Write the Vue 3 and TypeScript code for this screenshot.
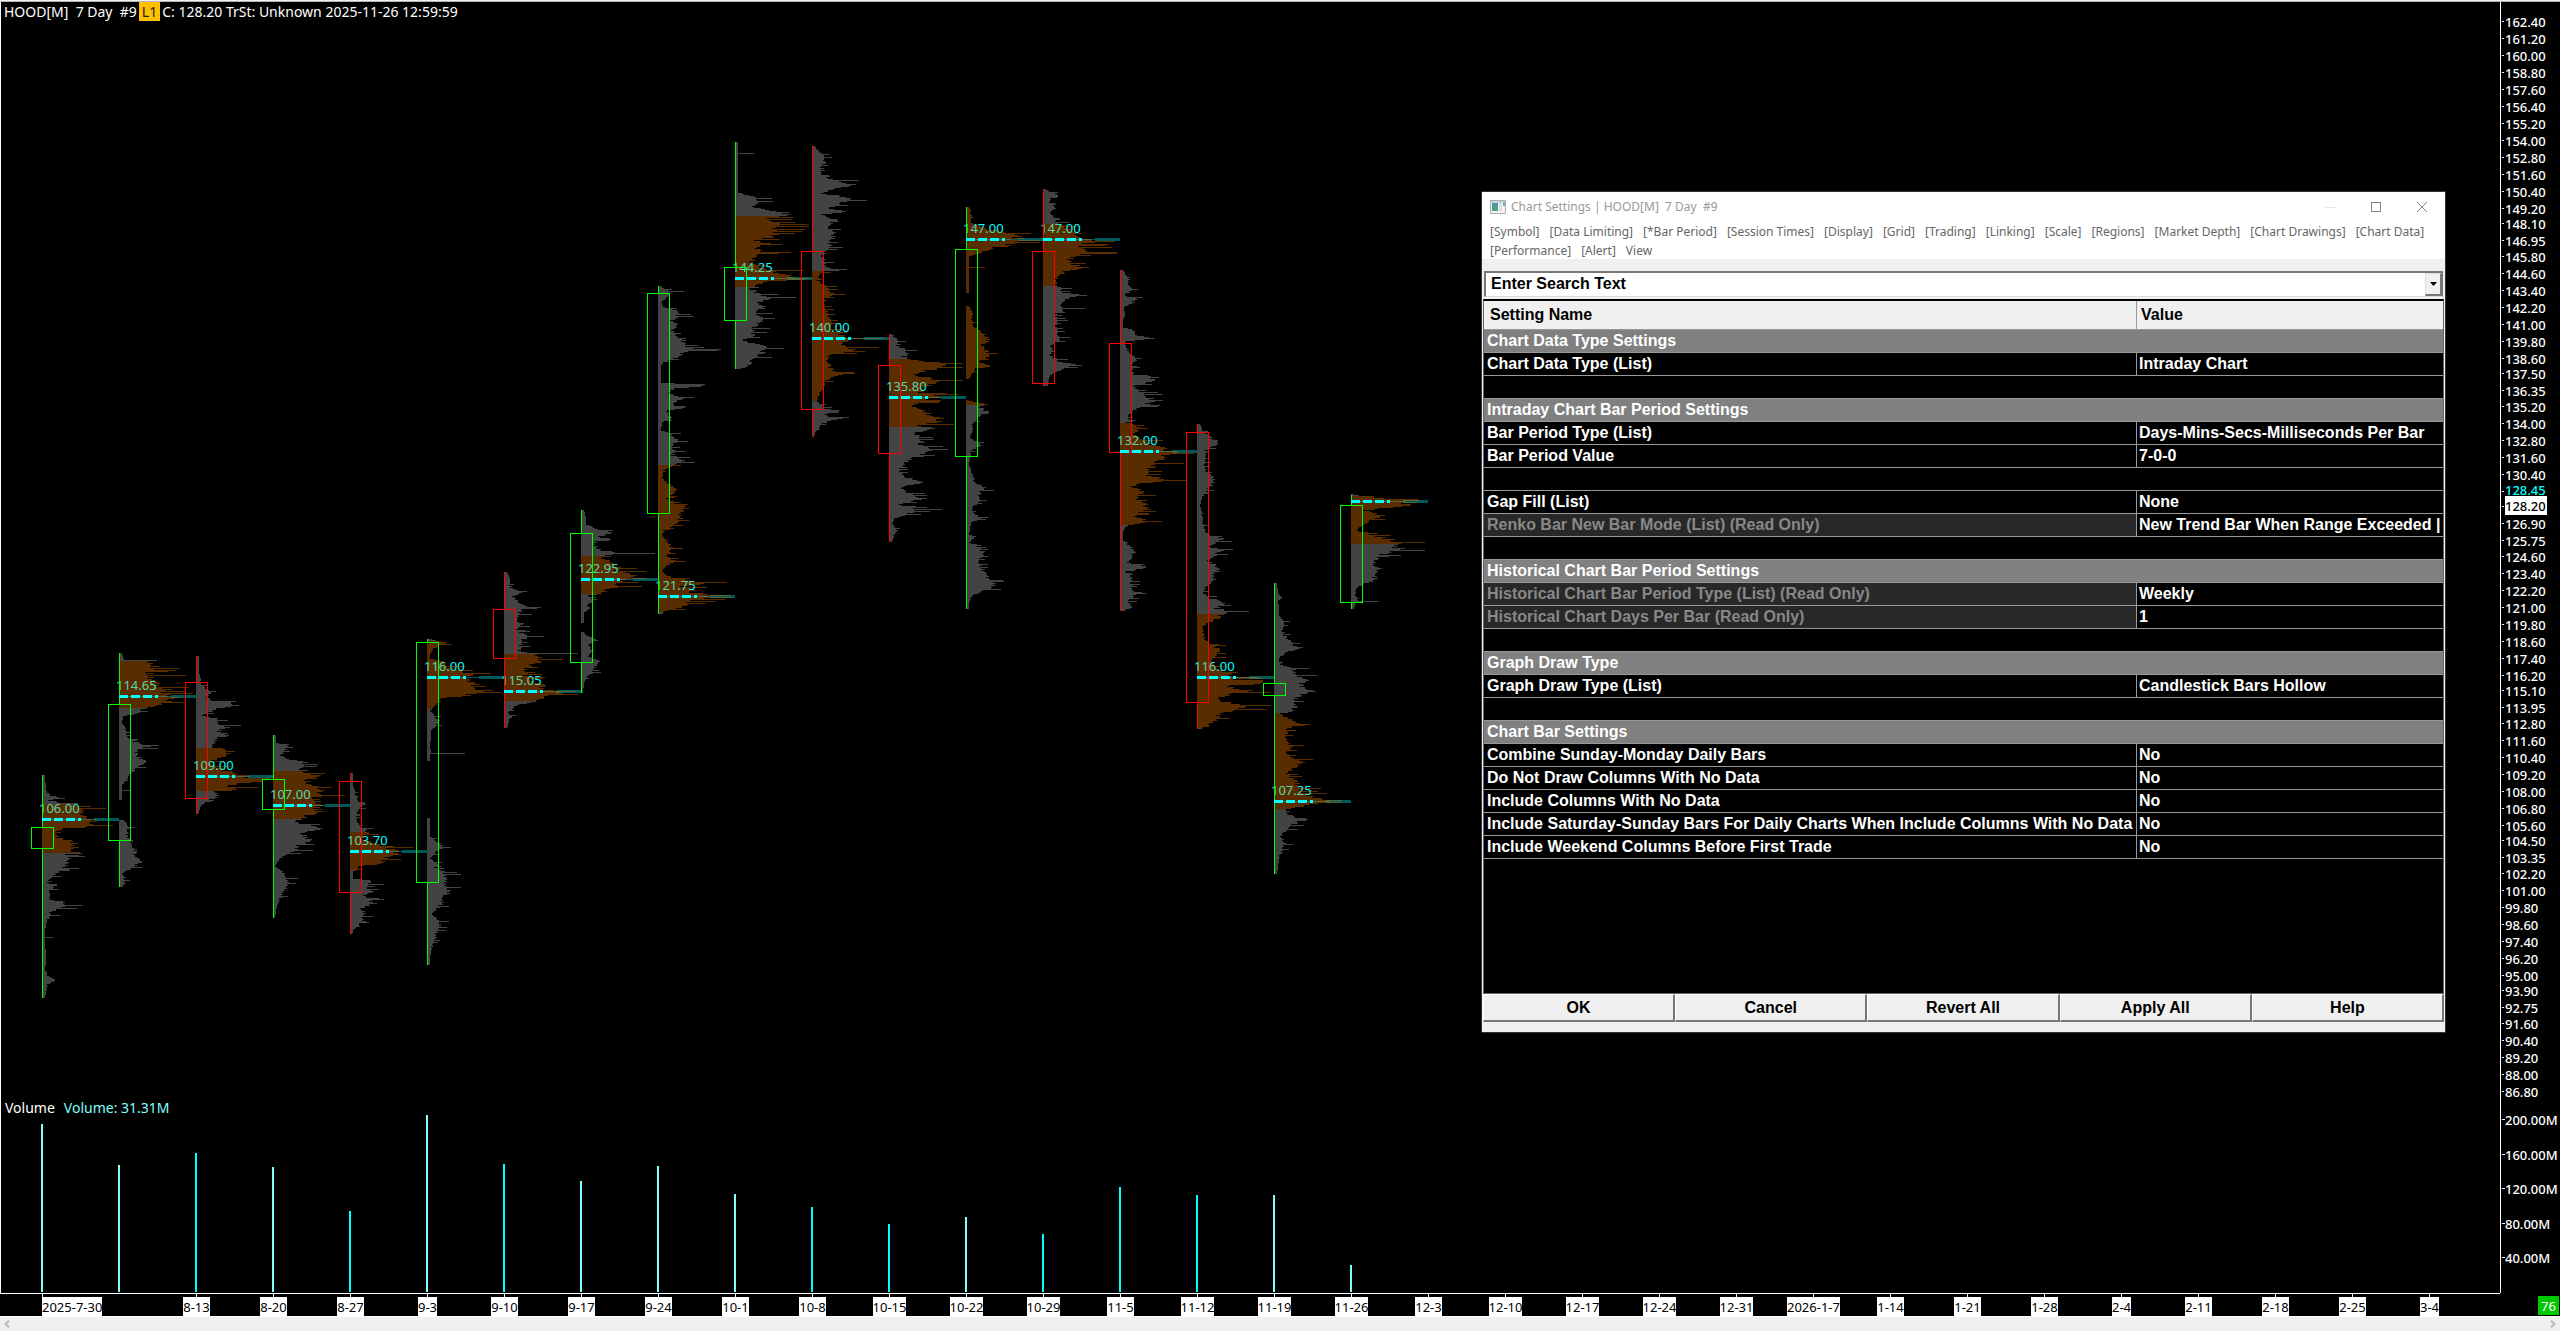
<script setup lang="ts">
interface Bar {
  up: boolean
  high: number
  low: number
  top: number
  bottom: number
  poc: number
  label: string
  area: number[][]
  volume: number
  shape: string
}

interface SettingRow {
  kind: 'section' | 'row' | 'blank'
  name?: string
  value?: string
  locked?: boolean
}

const STEP = 77
const FIRST_X = 42

/* Each shape is a list of y:width points of the volume-at-price outline. */
const bars: Bar[] = [
  { up: true, high: 775, low: 998, top: 827, bottom: 848, poc: 819, label: '106.00', area: [[804, 853]], volume: 1124, shape: '775:3 790:4 795:10 797:19 800:8 803:28 804:35 808:40 813:46 819:56 820:56 827:50 828:28 831:16 838:17 840:34 844:38 848:38 852:28 855:27 861:32 866:26 872:18 876:12 882:6 885:16 890:9 899:9 901:22 905:30 908:22 912:8 915:12 920:5 930:3 936:3 937:14 938:3 960:4 970:3 975:7 980:15 984:7 990:4 998:3' },
  { up: true, high: 653, low: 887, top: 704, bottom: 840, poc: 696, label: '114.65', area: [[661, 708]], volume: 1165, shape: '653:3 659:5 660:24 661:35 665:43 670:36 674:35 675:48 676:35 680:37 684:44 688:55 690:55 691:75 692:56 697:66 700:55 704:48 707:33 710:24 711:33 714:15 716:4 723:3 727:8 735:9 740:13 742:20 746:36 750:20 755:22 760:28 762:35 764:25 769:18 775:12 780:9 784:3 789:3 790:13 791:3 800:3 800:0 820:0 820:6 825:11 832:10 836:9 840:15 845:15 850:20 855:17 861:25 867:17 870:8 873:3 880:7 887:3' },
  { up: false, high: 656, low: 814, top: 682, bottom: 798, poc: 776, label: '109.00', area: [[748, 791]], volume: 1153, shape: '656:3 672:3 684:6 690:14 691:20 695:10 700:18 703:46 705:45 708:25 712:15 715:8 718:22 722:25 727:34 731:26 734:38 738:25 742:22 748:17 748:30 751:43 755:33 760:18 765:20 770:35 773:48 778:62 780:50 782:58 786:38 790:43 791:20 795:24 798:20 801:12 805:5 814:2' },
  { up: true, high: 735, low: 918, top: 779, bottom: 809, poc: 805, label: '107.00', area: [[771, 819]], volume: 1167, shape: '735:3 742:3 745:18 750:14 755:9 759:18 762:40 766:28 770:38 774:40 776:58 779:38 785:45 790:54 795:50 800:50 805:58 809:50 812:52 815:40 819:30 820:25 824:35 828:55 833:35 840:40 845:30 850:25 855:12 862:4 866:2 870:10 880:18 888:14 895:10 903:5 910:3 918:2' },
  { up: false, high: 773, low: 934, top: 781, bottom: 892, poc: 851, label: '103.70', area: [[832, 870]], volume: 1211, shape: '773:3 785:3 795:6 802:12 804:20 808:10 813:8 820:7 826:14 829:18 832:20 835:18 838:14 843:28 846:45 847:75 848:46 854:55 857:40 860:35 863:36 866:10 870:8 871:3 878:3 880:22 883:24 886:16 892:28 895:15 903:28 908:12 914:18 918:15 925:10 930:3 934:2' },
  { up: true, high: 639, low: 965, top: 642, bottom: 882, poc: 677, label: '116.00', area: [[641, 709]], volume: 1115, shape: '639:5 642:22 646:12 650:5 654:3 658:3 661:20 668:28 674:46 678:48 682:48 686:62 690:50 692:66 695:45 698:18 703:12 709:6 710:3 715:8 720:13 725:12 730:4 738:4 745:3 752:4 753:25 754:3 761:3 761:0 818:0 818:3 836:3 840:10 846:20 850:12 855:7 858:3 864:15 867:8 872:22 880:20 885:20 890:26 893:25 897:15 902:18 908:12 914:5 918:12 924:16 930:12 936:10 942:8 950:4 958:3 965:3' },
  { up: false, high: 572, low: 728, top: 609, bottom: 658, poc: 691, label: '115.05', area: [[654, 701]], volume: 1164, shape: '572:3 580:7 586:6 592:20 596:10 602:17 606:30 609:20 613:18 620:15 624:22 630:14 634:24 636:30 640:18 645:20 650:17 652:25 653:60 654:35 658:42 662:40 665:30 670:22 675:25 680:30 685:45 689:50 691:72 693:60 696:50 699:45 701:35 703:25 706:12 712:4 716:10 720:5 728:3' },
  { up: true, high: 510, low: 693, top: 533, bottom: 662, poc: 579, label: '122.95', area: [[556, 594]], volume: 1181, shape: '510:3 517:5 524:5 528:18 531:28 533:34 536:22 545:15 550:25 553:55 555:25 556:20 560:30 566:42 570:40 574:58 578:70 580:50 586:42 590:28 594:20 595:8 601:14 605:6 608:12 612:3 622:3 623:0 632:0 632:3 636:8 640:20 645:8 650:14 656:8 660:20 666:16 672:14 676:7 682:3 693:2' },
  { up: true, high: 286, low: 614, top: 293, bottom: 513, poc: 596, label: '121.75', area: [[465, 612]], volume: 1166, shape: '286:3 290:12 291:34 292:15 297:10 302:3 306:5 310:20 316:23 320:15 325:22 330:17 336:20 338:30 344:30 349:42 352:30 357:22 362:6 365:3 382:3 385:50 387:20 392:12 398:26 405:16 408:25 410:10 415:12 418:16 422:4 430:3 433:15 440:24 445:15 450:20 455:17 460:32 463:20 466:18 470:6 478:5 485:15 490:23 494:17 498:10 503:20 507:34 515:25 520:26 525:18 530:7 536:5 542:12 548:16 552:14 556:10 560:20 565:12 570:5 575:10 578:22 583:50 586:30 592:42 596:60 600:40 604:32 608:22 611:8 614:3' },
  { up: true, high: 142, low: 369, top: 267, bottom: 320, poc: 278, label: '144.25', area: [[216, 287]], volume: 1194, shape: '142:3 152:3 153:22 154:3 192:3 196:20 201:30 207:20 210:40 212:60 215:55 216:50 220:35 224:58 230:45 236:45 240:25 244:30 248:22 251:34 252:65 253:28 260:17 265:22 270:45 275:60 277:66 280:40 284:25 287:18 292:25 297:40 302:30 308:32 314:25 320:32 325:25 330:20 335:22 340:8 345:32 349:38 354:27 360:20 366:15 369:3' },
  { up: false, high: 146, low: 437, top: 251, bottom: 409, poc: 338, label: '140.00', area: [[271, 401]], volume: 1207, shape: '146:3 154:12 162:16 168:9 176:12 184:50 190:20 193:10 197:46 202:34 208:20 211:42 214:12 220:28 225:18 230:25 236:26 242:20 248:20 255:12 260:15 264:14 268:20 270:35 271:15 275:8 280:6 285:14 293:25 298:15 305:15 315:18 325:22 332:25 338:50 342:35 347:45 351:55 354:20 360:17 368:22 374:32 380:15 386:14 392:9 400:6 402:8 408:15 411:35 414:10 418:32 423:12 428:7 432:3 437:2' },
  { up: false, high: 334, low: 542, top: 365, bottom: 453, poc: 397, label: '135.80', area: [[359, 427]], volume: 1224, shape: '334:3 340:12 345:8 350:22 355:12 359:25 363:60 368:52 374:28 380:58 386:42 392:35 397:60 400:40 405:28 412:42 418:55 421:65 425:35 428:50 433:30 440:35 446:40 452:48 456:28 462:20 468:12 475:15 482:38 487:15 492:22 498:38 504:12 509:34 514:20 518:6 523:3 530:9 536:5 542:2' },
  { up: true, high: 207, low: 609, top: 249, bottom: 456, poc: 239, label: '147.00', area: [[207, 405]], volume: 1217, shape: '207:3 215:7 222:5 228:20 232:45 234:55 239:60 245:50 248:28 253:15 256:3 266:3 267:24 268:3 292:3 293:0 306:0 306:3 312:8 320:7 325:8 332:20 340:25 345:18 350:25 356:24 362:15 366:30 368:12 374:6 378:3 379:0 400:0 400:3 404:25 406:15 412:25 418:12 424:8 430:8 436:4 440:10 445:17 450:6 458:4 465:3 475:8 482:10 487:22 492:15 500:16 506:8 512:7 518:20 522:5 534:3 536:12 542:3 545:10 552:22 558:15 565:16 572:22 578:26 585:34 590:20 595:8 602:3 609:3' },
  { up: false, high: 189, low: 386, top: 251, bottom: 383, poc: 239, label: '147.00', area: [[224, 286]], volume: 1234, shape: '189:3 196:20 198:8 202:8 208:14 212:8 216:12 220:14 224:20 228:30 232:40 236:40 240:56 244:48 248:45 252:62 255:40 260:28 264:32 267:52 270:30 275:18 280:15 286:15 287:22 293:20 296:34 302:20 308:26 314:14 320:16 326:14 332:17 338:22 344:7 350:12 355:8 361:20 365:40 368:22 372:15 376:8 380:6 386:6' },
  { up: false, high: 270, low: 611, top: 343, bottom: 452, poc: 451, label: '132.00', area: [[423, 525]], volume: 1187, shape: '270:3 277:10 283:10 290:13 295:5 298:20 302:15 307:4 315:5 320:3 327:3 329:15 335:18 338:36 341:6 350:8 355:16 360:18 366:14 373:15 377:25 380:42 385:15 390:20 396:34 402:36 408:20 414:10 420:10 422:8 424:18 428:22 434:15 440:30 445:40 449:55 453:60 457:48 462:45 468:35 474:28 479:50 482:25 486:15 492:28 498:18 505:32 511:22 516:18 521:32 525:10 527:5 532:3 540:3 544:10 550:17 556:14 562:9 567:33 571:5 576:12 582:14 588:12 594:18 600:10 607:14 611:2' },
  { up: false, high: 424, low: 729, top: 432, bottom: 702, poc: 677, label: '116.00', area: [[614, 728]], volume: 1195, shape: '424:3 430:6 436:14 442:26 446:17 450:10 458:10 465:8 472:12 478:20 484:17 490:11 498:5 505:3 512:5 520:7 528:8 535:14 538:30 546:15 550:28 560:12 568:27 575:18 580:20 586:10 592:7 598:15 601:32 608:22 611:38 614:34 615:28 620:20 624:7 632:7 640:10 648:24 655:22 661:16 668:25 675:40 680:46 685:35 690:56 697:25 701:30 706:60 710:38 714:25 720:22 724:12 729:3' },
  { up: true, high: 583, low: 874, top: 683, bottom: 695, poc: 801, label: '107.25', area: [[713, 809]], volume: 1195, shape: '583:3 592:4 598:10 600:4 608:5 615:5 620:12 626:10 632:8 638:16 644:22 647:30 652:15 658:5 664:8 668:22 674:25 680:35 686:30 691:52 694:30 700:22 706:25 711:22 713:8 718:15 723:30 728:15 734:14 740:14 746:20 752:14 758:22 762:34 768:22 774:15 780:24 786:28 792:35 797:45 801:58 804:45 808:20 810:8 815:20 819:36 824:22 830:14 836:8 842:12 850:10 858:5 866:4 874:3' },
  { up: true, high: 495, low: 609, top: 505, bottom: 602, poc: 501, label: '', area: [[496, 544]], volume: 1265, shape: '494:3 496:15 498:40 500:70 504:65 507:48 510:15 515:35 519:25 524:15 530:6 534:20 539:45 542:52 545:45 549:60 554:35 558:28 564:28 569:34 575:28 580:28 583:15 588:6 595:4 600:8 601:34 602:6 609:2' },
]

const barX = (i: number): number => FIRST_X + STEP * i

function jitter(seed: number): number {
  const v = Math.sin(seed * 127.1) * 43758.5453
  return v - Math.floor(v)
}

function profilePath(bar: Bar, index: number, inside: boolean): string {
  const pts = bar.shape.split(' ').map((p) => p.split(':').map(Number))
  const x = barX(index)
  let d = ''
  for (let y = pts[0][0]; y < pts[pts.length - 1][0]; y++) {
    const isInside = bar.area.some(([a, b]) => y >= a && y < b)
    if (isInside !== inside) continue
    let k = 0
    while (k < pts.length - 2 && pts[k + 1][0] <= y) k++
    const [y0, w0] = pts[k]
    const [y1, w1] = pts[k + 1]
    let w = y1 === y0 ? w1 : w0 + ((w1 - w0) * (y - y0)) / (y1 - y0)
    if (w < 1) continue
    if (w > 5) {
      const r = jitter(y + index * 613)
      w *= r > 0.86 ? 1.2 + (r - 0.86) * 3 : 0.74 + r * 0.3
    }
    d += `M${x} ${y}h${Math.min(74, Math.max(2, Math.round(w)))}v1H${x}z`
  }
  return d
}

const profiles = bars.map((b, i) => ({
  ...b,
  x: barX(i),
  outer: profilePath(b, i, false),
  inner: profilePath(b, i, true),
}))

const PRICE_TOP = 22
const PX_PER_POINT = 14.152
const prices: string[] = (
  '162.40 161.20 160.00 158.80 157.60 156.40 155.20 154.00 152.80 151.60 150.40 149.20 148.10 146.95 145.80 144.60 ' +
  '143.40 142.20 141.00 139.80 138.60 137.50 136.35 135.20 134.00 132.80 131.60 130.40 126.90 125.75 124.60 123.40 ' +
  '122.20 121.00 119.80 118.60 117.40 116.20 115.10 113.95 112.80 111.60 110.40 109.20 108.00 106.80 105.60 104.50 ' +
  '103.35 102.20 101.00 99.80 98.60 97.40 96.20 95.00 93.90 92.75 91.60 90.40 89.20 88.00 86.80'
).split(' ')
const priceY = (p: string): number => Math.round(PRICE_TOP + (162.4 - Number(p)) * PX_PER_POINT)

const volumeTicks = [
  { y: 1120, text: '200.00M' },
  { y: 1155, text: '160.00M' },
  { y: 1189, text: '120.00M' },
  { y: 1224, text: '80.00M' },
  { y: 1258, text: '40.00M' },
]

const dates: string[] = [
  '2025-7-30', '', '8-13', '8-20', '8-27', '9-3', '9-10', '9-17', '9-24', '10-1', '10-8', '10-15', '10-22', '10-29',
  '11-5', '11-12', '11-19', '11-26', '12-3', '12-10', '12-17', '12-24', '12-31', '2026-1-7', '1-14', '1-21', '1-28',
  '2-4', '2-11', '2-18', '2-25', '3-4',
]

const menu: string[] = [
  '[Symbol]', '[Data Limiting]', '[*Bar Period]', '[Session Times]', '[Display]', '[Grid]', '[Trading]', '[Linking]',
  '[Scale]', '[Regions]', '[Market Depth]', '[Chart Drawings]', '[Chart Data]', '[Performance]', '[Alert]', 'View',
]

const settings: SettingRow[] = [
  { kind: 'section', name: 'Chart Data Type Settings' },
  { kind: 'row', name: 'Chart Data Type (List)', value: 'Intraday Chart' },
  { kind: 'blank' },
  { kind: 'section', name: 'Intraday Chart Bar Period Settings' },
  { kind: 'row', name: 'Bar Period Type (List)', value: 'Days-Mins-Secs-Milliseconds Per Bar' },
  { kind: 'row', name: 'Bar Period Value', value: '7-0-0' },
  { kind: 'blank' },
  { kind: 'row', name: 'Gap Fill (List)', value: 'None' },
  { kind: 'row', name: 'Renko Bar New Bar Mode (List) (Read Only)', value: 'New Trend Bar When Range Exceeded |', locked: true },
  { kind: 'blank' },
  { kind: 'section', name: 'Historical Chart Bar Period Settings' },
  { kind: 'row', name: 'Historical Chart Bar Period Type (List) (Read Only)', value: 'Weekly', locked: true },
  { kind: 'row', name: 'Historical Chart Days Per Bar (Read Only)', value: '1', locked: true },
  { kind: 'blank' },
  { kind: 'section', name: 'Graph Draw Type' },
  { kind: 'row', name: 'Graph Draw Type (List)', value: 'Candlestick Bars Hollow' },
  { kind: 'blank' },
  { kind: 'section', name: 'Chart Bar Settings' },
  { kind: 'row', name: 'Combine Sunday-Monday Daily Bars', value: 'No' },
  { kind: 'row', name: 'Do Not Draw Columns With No Data', value: 'No' },
  { kind: 'row', name: 'Include Columns With No Data', value: 'No' },
  { kind: 'row', name: 'Include Saturday-Sunday Bars For Daily Charts When Include Columns With No Data', value: 'No' },
  { kind: 'row', name: 'Include Weekend Columns Before First Trade', value: 'No' },
]

const actions: string[] = ['OK', 'Cancel', 'Revert All', 'Apply All', 'Help']
</script>

<template>
  <main class="app">
    <div class="strip"></div>
    <div class="chart">
      <section class="pane price">
        <svg class="plot" shape-rendering="crispEdges">
          <g transform="translate(-1 -2)">
            <template v-for="(b, i) in profiles" :key="i">
              <rect :x="b.x" :y="b.poc" width="52" height="1" fill="#005959" />
              <rect :x="b.x + 52" :y="b.poc - 1" width="25" height="3" fill="#005959" />
              <text class="mark" :x="b.x - 3" :y="b.poc - 6">{{ b.label }}</text>
              <path :d="b.outer" fill="#c0c0c0" fill-opacity="0.35" />
              <path :d="b.inner" fill="#ff8000" fill-opacity="0.35" />
            </template>
            <template v-for="(b, i) in profiles" :key="'c' + i">
              <g :fill="b.up ? '#00ff00' : '#ff0000'">
                <rect :x="b.x" :y="b.high" width="1" :height="b.top - b.high" />
                <rect :x="b.x" :y="b.bottom" width="1" :height="b.low - b.bottom" />
              </g>
              <rect
                :x="b.x - 10.5"
                :y="b.top + 0.5"
                width="22"
                :height="b.bottom - b.top"
                fill="none"
                :stroke="b.up ? '#00ff00' : '#ff0000'"
              />
              <path :d="`M${b.x} ${b.poc + 0.5}h39`" stroke="#00ffff" stroke-width="3" stroke-dasharray="9 3" />
            </template>
          </g>
        </svg>
        <header class="status">
          <span class="symbol">HOOD[M]&nbsp; 7 Day&nbsp; #9</span>
          <span class="badge">L1</span>
          <span>C: 128.20 TrSt: Unknown 2025-11-26 12:59:59</span>
        </header>
      </section>
      <svg class="scale">
        <g transform="translate(0 -2)">
          <g v-for="p in prices" :key="p">
            <rect x="1" :y="priceY(p) - 1" width="2" height="1" />
            <text x="4" :y="priceY(p) + 5">{{ p }}</text>
          </g>
          <rect x="1" y="491" width="2" height="1" />
          <text class="last" x="4" y="495">128.45</text>
          <rect x="1" y="506" width="2" height="1" />
          <rect x="4" y="496" width="42" height="19" />
          <text class="current" x="4" y="511">128.20</text>
        </g>
      </svg>

      <section class="pane volume">
        <svg class="plot" shape-rendering="crispEdges">
          <g transform="translate(-1 -1096)">
            <rect
              v-for="(b, i) in profiles"
              :key="i"
              :x="b.x - 1"
              :y="b.volume"
              width="2"
              :height="1292 - b.volume"
              :fill="b.up ? '#80ffff' : '#00ffff'"
            />
          </g>
        </svg>
        <header class="study"><span>Volume</span><span class="reading">Volume: 31.31M</span></header>
      </section>
      <svg class="scale">
        <g transform="translate(0 -1096)">
          <g v-for="t in volumeTicks" :key="t.text">
            <rect x="1" :y="t.y - 1" width="3" height="1" />
            <text x="4" :y="t.y + 5">{{ t.text }}</text>
          </g>
        </g>
      </svg>

      <div class="timeline">
        <div v-for="(d, i) in dates" :key="i" class="slot" :class="{ first: i === 0 }">
          <template v-if="d">
            <i class="tick"></i>
            <time class="date">{{ d }}</time>
          </template>
        </div>
      </div>
      <div class="corner"><span class="count">76</span></div>
    </div>
    <div class="scrollbar">
      <button type="button" aria-label="Scroll left">
        <svg width="6" height="8"><path d="M5 0.5L1.5 4L5 7.5" /></svg>
      </button>
      <button type="button" aria-label="Scroll right">
        <svg width="6" height="8"><path d="M1 0.5L4.5 4L1 7.5" /></svg>
      </button>
    </div>

    <section class="dialog" role="dialog" aria-label="Chart Settings">
      <header class="titlebar">
        <svg class="appicon" width="16" height="14">
          <rect x="0.5" y="0.5" width="15" height="13" fill="#f4f4f4" stroke="#a9b0b6" />
          <rect x="1" y="1" width="14" height="2" fill="#c9d3dc" />
          <rect x="2" y="3" width="6" height="8" fill="#4d94a8" />
          <rect x="2" y="7" width="6" height="4" fill="#4f9f7e" />
          <rect x="9" y="3" width="3" height="8" fill="#dedede" />
          <rect x="13" y="2" width="2" height="4" fill="#7fb0ac" />
        </svg>
        <h1>Chart Settings | HOOD[M]&nbsp; 7 Day&nbsp; #9</h1>
        <button type="button" aria-label="Minimize"><svg width="10" height="10"><path d="M0 5.5H10" stroke="#e4e4e4" /></svg></button>
        <button type="button" aria-label="Maximize"><svg width="10" height="10"><rect x="0.5" y="0.5" width="9" height="9" stroke="#888" fill="none" /></svg></button>
        <button type="button" aria-label="Close"><svg width="10" height="10"><path d="M0 0L10 10M10 0L0 10" stroke="#888" /></svg></button>
      </header>
      <nav class="menu">
        <button v-for="m in menu" :key="m" type="button">{{ m }}</button>
      </nav>
      <div class="search">
        <input type="text" value="Enter Search Text" aria-label="Search text" />
        <button type="button" aria-label="Show search history">
          <svg width="7" height="4"><path d="M0 0H7L3.5 4Z" /></svg>
        </button>
      </div>
      <div class="listing">
        <table>
          <colgroup>
            <col class="names" />
            <col />
          </colgroup>
          <thead>
            <tr><th scope="col">Setting Name</th><th scope="col">Value</th></tr>
          </thead>
          <tbody>
            <tr v-for="(s, i) in settings" :key="i" :class="[s.kind, { locked: s.locked }]">
              <template v-if="s.kind === 'row'">
                <td>{{ s.name }}</td>
                <td>{{ s.value }}</td>
              </template>
              <td v-else colspan="2">{{ s.name }}</td>
            </tr>
          </tbody>
        </table>
      </div>
      <footer class="actions">
        <button v-for="a in actions" :key="a" type="button">{{ a }}</button>
      </footer>
    </section>
  </main>
</template>

<style>
body {
  margin: 0;
  background: #000;
}
</style>

<style scoped>
* {
  box-sizing: border-box;
}
button {
  margin: 0;
  padding: 0;
  border: 0;
  background: none;
  font: inherit;
  color: inherit;
}
.app {
  position: relative;
  display: flex;
  flex-direction: column;
  height: 100vh;
  overflow: hidden;
  background: #000;
  color: #fff;
  font: 13px/19px "Noto Sans", "Open Sans", sans-serif;
}
.strip {
  flex: none;
  height: 2px;
  background: linear-gradient(#f0f2f4 1px, #b4b4b4 1px);
}
.chart {
  flex: 1;
  min-height: 0;
  display: grid;
  grid-template-columns: minmax(0, 1fr) 60px;
  grid-template-rows: minmax(0, 1fr) 197px 23px;
}
.pane {
  position: relative;
  min-height: 0;
  overflow: hidden;
  border-left: 1px solid #fff;
}
.plot {
  display: block;
  width: 100%;
  height: 100%;
}
.mark {
  fill: #00ffff;
}
.status {
  position: absolute;
  top: 0;
  left: 3px;
  display: flex;
  gap: 2px;
  font-size: 14px;
  white-space: pre;
}
.badge {
  padding: 0 3px;
  background: #ffc000;
  color: #222;
}
.study {
  position: absolute;
  top: 2px;
  left: 4px;
  display: flex;
  gap: 9px;
  font-size: 14px;
}
.reading {
  color: #80ffff;
}
.scale {
  display: block;
  width: 100%;
  height: 100%;
  overflow: visible;
  border-left: 1px solid #fff;
  fill: #fff;
  font-weight: 500;
}
.scale .last {
  fill: #00ffff;
}
.scale .current {
  fill: #000;
}
.timeline {
  display: flex;
  padding-left: 4px;
  overflow: hidden;
  border-top: 1px solid #fff;
}
.slot {
  flex: none;
  width: 77px;
  display: flex;
  flex-direction: column;
  align-items: center;
}
.slot.first {
  align-items: flex-start;
  padding-left: 38px;
}
.tick {
  width: 1px;
  height: 3px;
  background: #fff;
}
.date,
.count {
  padding-top: 2px;
  line-height: 17px;
  white-space: nowrap;
}
.date {
  background: #fff;
  color: #000;
}
.corner {
  display: flex;
  justify-content: flex-end;
  align-items: flex-end;
  padding: 0 1px 1px 0;
}
.count {
  width: 21px;
  text-align: center;
  background: #00c800;
}
.scrollbar {
  flex: none;
  height: 15px;
  display: flex;
  justify-content: space-between;
  padding: 0 4px;
  border-top: 1px solid #fff;
  background: #f0f0f0;
}
.scrollbar button {
  display: flex;
  align-items: center;
}
.scrollbar path {
  fill: none;
  stroke: #bbb;
  stroke-width: 2;
}
.dialog {
  position: absolute;
  top: 191px;
  right: 114px;
  width: 965px;
  border: 1px solid #333;
  background: #f0f0f0;
  color: #000;
  font: bold 16px/22px "Liberation Sans", Arial, sans-serif;
}
.titlebar {
  display: flex;
  align-items: center;
  height: 30px;
  padding-left: 8px;
  background: #fff;
  color: #999;
}
.titlebar h1 {
  flex: 1;
  margin: 0 0 0 5px;
  font: 12px/18px "Noto Sans", "Open Sans", sans-serif;
}
.titlebar button {
  display: flex;
  justify-content: center;
  width: 46px;
}
.menu {
  display: flex;
  flex-wrap: wrap;
  column-gap: 10px;
  padding: 0 8px;
  height: 37px;
  background: #fff;
  color: #666;
  font: 12px/19px "Noto Sans", "Open Sans", sans-serif;
}
.menu button {
  height: 19px;
}
.search {
  display: flex;
  height: 26px;
  margin: 12px 2px 2px;
  border: 2px solid #777;
  border-right: 1px solid #777;
  border-bottom: 1px solid #ddd;
  background: #fff;
}
.search input {
  flex: 1;
  min-width: 0;
  padding: 0 0 2px 5px;
  border: 0;
  outline: 0;
  background: none;
  font: inherit;
  color: inherit;
}
.search button {
  display: flex;
  align-items: center;
  justify-content: center;
  width: 17px;
  border: 1px solid #ddd;
  border-right: 2px solid #777;
  border-bottom: 2px solid #777;
  background: #f0f0f0;
}
.listing {
  height: 695px;
  margin: 0 1px;
  border: 1px solid #666;
  border-top: 2px solid #000;
  background: #000;
}
table {
  width: 100%;
  table-layout: fixed;
  border-collapse: separate;
  border-spacing: 0;
  color: #fff;
}
.names {
  width: 653px;
}
th {
  height: 29px;
  padding: 0 6px;
  border-bottom: 1px solid #999;
  background: #f0f0f0;
  color: #000;
  text-align: left;
}
th + th {
  padding-left: 4px;
}
td {
  height: 23px;
  padding: 0 0 0 3px;
  border-bottom: 1px solid #999;
  overflow: hidden;
  white-space: nowrap;
}
td + td {
  padding-left: 2px;
}
th:first-child,
.row td:first-child {
  border-right: 1px solid #999;
}
.section td {
  background: #808080;
}
.locked td:first-child {
  background: #282828;
  color: #888;
}
.actions {
  display: flex;
  padding: 0 1px 10px;
}
.actions button {
  flex: 1;
  height: 28px;
  border: 1px solid #fff;
  border-right: 2px solid #777;
  border-bottom: 2px solid #777;
}
</style>
